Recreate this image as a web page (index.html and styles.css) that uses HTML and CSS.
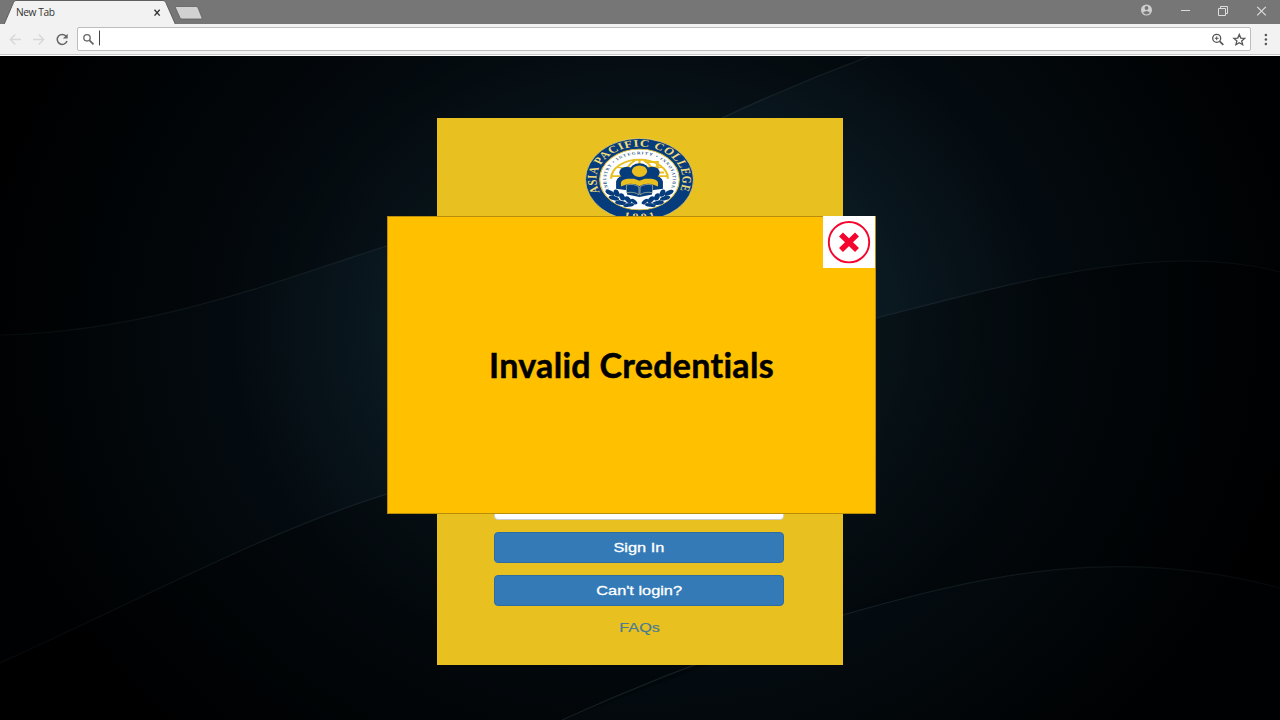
FILE: index.html
```html
<!DOCTYPE html>
<html lang="en">
<head>
<meta charset="utf-8">
<title>New Tab</title>
<link rel="stylesheet" href="styles.css">
</head>
<body>
<header class="browser">
  <div class="tabs">
    <svg class="tab-shapes" width="210" height="24" viewBox="0 0 210 24">
      <path d="M4 24.500 13.500 2.500Q14.300 .5 16 .5H163Q165 .5 165.800 2.500L175.500 24.500Z" fill="#f2f2f2" stroke="#5f5f5f"/>
      <path d="M176 6.500h20q1.500 0 2 1.300l4 10q.5 1.200-1 1.200h-19q-1.500 0-2-1.200l-4.500-10q-.5-1.300.5-1.300z" fill="#d1d1d1" stroke="#606060" stroke-width=".8"/>
      <path d="m154.500 9.800 5.200 5.800m0-5.800-5.200 5.800" stroke="#333" stroke-width="1.400"/>
    </svg>
    <span class="tab-title">New Tab</span>
    <svg class="window-controls" width="140" height="24" viewBox="1140 0 140 24" fill="none" stroke="#dcdcdc">
      <circle cx="1146.500" cy="10" r="5.500" fill="#cfcfcf" stroke="none"/>
      <circle cx="1146.500" cy="8" r="1.900" fill="#777" stroke="none"/>
      <path d="M1143 12.500q3.500-3 7 0-1.500 2-3.500 2t-3.500-2" fill="#777" stroke="none"/>
      <path d="M1181 10.500h9M1218.500 8.500h7v7h-7zM1220.500 8.500v-2h7v7h-2"/>
      <path d="m1257.200 6.800 8.600 8.600m0-8.600-8.600 8.600" stroke-width="1.200"/>
    </svg>
  </div>
  <div class="toolbar">
    <svg class="nav" width="77" height="30" viewBox="0 24 77 30" fill="none">
      <path d="M21 39.500H10.500m4.800-5-5 5 5 5M33 39.500h10.500m-4.800-5 5 5-5 5" stroke="#d8d8d8" stroke-width="1.400"/>
      <path d="M66.300 36.500A5 5 0 1 0 67 41" stroke="#666" stroke-width="1.500"/>
      <path d="M67.700 33.700v4.800h-4.800z" fill="#666"/>
    </svg>
    <div class="address">
      <svg width="24" height="22" viewBox="78 28 24 22" fill="none" stroke="#666">
        <circle cx="87" cy="37.800" r="3.200" stroke-width="1.300"/>
        <path d="m89.500 40.300 4 4" stroke-width="1.700"/>
        <path d="M99.500 30.500v15" stroke="#444"/>
      </svg>
      <svg width="42" height="22" viewBox="1208 28 42 22" fill="none" stroke="#555">
        <circle cx="1216.700" cy="38.300" r="4" stroke-width="1.300"/>
        <path d="m1219.700 41.300 3.600 3.500" stroke-width="1.700"/>
        <path d="M1214.800 38.300h3.800m-1.900-1.900v3.800"/>
        <path d="m1239.300 34.500 1.500 3.600 3.900.3-3 2.500 1 3.800-3.400-2-3.400 2 1-3.800-3-2.500 3.900-.3z" stroke-width="1.300"/>
      </svg>
    </div>
    <svg class="menu" width="28" height="30" viewBox="1252 24 28 30" fill="#555">
      <circle cx="1265.900" cy="35" r="1.250"/><circle cx="1265.900" cy="39.500" r="1.250"/><circle cx="1265.900" cy="44" r="1.250"/>
    </svg>
  </div>
</header>

<main class="page">
  <svg class="backdrop" width="1280" height="664" viewBox="0 56 1280 664" fill="none">
    <defs>
      <radialGradient id="glow" gradientUnits="userSpaceOnUse" cx="0" cy="0" r="1" gradientTransform="matrix(660 0 0 560 640 330)">
        <stop offset="0" stop-color="#112c3a"/><stop offset=".3" stop-color="#0c1e27"/><stop offset=".42" stop-color="#09161d"/><stop offset=".62" stop-color="#040b10"/><stop offset=".85" stop-color="#010507"/><stop offset="1" stop-color="#000102"/>
      </radialGradient>
      <radialGradient id="line" gradientUnits="userSpaceOnUse" cx="640" cy="360" r="660">
        <stop offset="0" stop-color="#20333d"/><stop offset=".4" stop-color="#17242b"/><stop offset=".7" stop-color="#0d1518"/><stop offset="1" stop-color="#05090a"/>
      </radialGradient>
    </defs>
    <path d="M0 56h1280v664H0z" fill="url(#glow)"/>
    <path d="M0 335C150 332 280 280 387 246C570 185 722 118 722 118Q795 84 870 56H0z" fill="#000" opacity=".24"/>
    <path d="M0 663C150 595 270 530 387 494L876 318C1010 284 1160 240 1280 272V588C1120 545 990 573 843 615L562 720H0z" fill="#000" opacity=".28"/>
    <g stroke="url(#line)" stroke-width="1.200">
      <path d="M0 335C150 332 280 280 387 246C570 185 722 118 722 118Q795 84 870 56"/>
      <path d="M0 663C150 595 270 530 387 494L876 318C1010 284 1160 240 1280 272"/>
      <path d="M562 720Q705 655 843 615C990 573 1120 545 1280 588"/>
    </g>
  </svg>

  <section class="login">
    <svg class="seal" width="109" height="83" viewBox="0 0 200 200" preserveAspectRatio="none">
      <defs>
        <path id="ring" d="M27.600 131A79 79 0 1 1 172.400 131"/>
        <path id="motto" d="M44 124A61 61 0 1 1 156 124"/>
        <path id="year" d="M45 179A96 96 0 0 0 155 179"/>
      </defs>
      <circle cx="100" cy="100" r="99" fill="#063c7c" stroke="#f0d676" stroke-width="1.500"/>
      <circle cx="100" cy="100" r="73" fill="#fff" stroke="#e9c33a" stroke-width="2"/>
      <text class="seal-name"><textPath href="#ring" textLength="308">ASIA PACIFIC COLLEGE</textPath></text>
      <text class="seal-motto"><textPath href="#motto" textLength="236">INDUSTRY • INTEGRITY • INNOVATION</textPath></text>
      <text class="seal-year"><textPath href="#year" startOffset="50%" text-anchor="middle" textLength="60">1991</textPath></text>
      <g fill="none" stroke="#e9bf20" stroke-width="4">
        <path d="M48 98a52 46 0 0 1 104 0M60 70q40 16 80 0M48 92h104M74 91q0-23 18-37M126 91q0-23-18-37M100 52v30"/>
        <path d="M111 58h22v13h-15v12h27" stroke-width="5"/>
      </g>
      <g fill="#063c7c">
        <circle cx="100" cy="79" r="18"/><circle cx="77" cy="83" r="14"/><circle cx="123" cy="83" r="14"/>
        <path d="M57 122V105q2-14 20-15h46q18 1 20 15v17l-20 4v10l-23 6-23-6v-10z"/>
      </g>
      <g fill="#e9bf20">
        <circle cx="100" cy="80" r="14"/>
        <path d="M66 117v-10q2-8 12-9h12l10 5 10-5h12q10 1 12 9v10l-12-6q-12-3-22 5-10-8-22-5z"/>
      </g>
      <path d="M76 113q14-4 23 5v19q-9-9-23-5zM101 118q9-9 23-5v19q-14-4-23 5z" fill="#063c7c" stroke="#e9dca0" stroke-width="1.200"/>
      <g id="laurel" fill="#063c7c">
        <path d="M46 128q13 32 47 31" fill="none" stroke="#063c7c" stroke-width="2"/>
        <ellipse cx="46" cy="132" rx="10" ry="5" transform="rotate(35 46 132)"/><ellipse cx="58" cy="133" rx="9" ry="5" transform="rotate(75 58 133)"/>
        <ellipse cx="53" cy="145" rx="10" ry="5" transform="rotate(20 53 145)"/><ellipse cx="68" cy="142" rx="9" ry="5" transform="rotate(75 68 142)"/>
        <ellipse cx="65" cy="156" rx="10" ry="5" transform="rotate(10 65 156)"/><ellipse cx="79" cy="149" rx="9" ry="5" transform="rotate(60 79 149)"/>
        <ellipse cx="80" cy="162" rx="10" ry="4" transform="rotate(-10 80 162)"/><ellipse cx="90" cy="153" rx="8" ry="4" transform="rotate(50 90 153)"/>
      </g>
      <use href="#laurel" transform="matrix(-1 0 0 1 200 0)"/>
    </svg>
    <div class="form">
      <div class="field"></div>
      <button class="button"><span class="wide">Sign In</span></button>
      <button class="button"><span class="wide">Can't login?</span></button>
      <a class="faq"><span class="wide">FAQs</span></a>
    </div>
  </section>

  <section class="dialog" role="alertdialog">
    <h1 class="message">Invalid Credentials</h1>
    <div class="close">
      <svg width="52" height="52" viewBox="0 0 52 52" fill="none" stroke="#f5052d">
        <circle cx="26" cy="26.200" r="20.200" stroke-width="1.900"/>
        <path d="m18 18.500 16 15.600m0-15.600L18 34.100" stroke-width="5.600"/>
      </svg>
    </div>
  </section>
</main>
</body>
</html>
```

FILE: styles.css
```css
* { box-sizing: border-box; }
body { margin: 0; width: 1280px; height: 720px; overflow: hidden; font-family: "Liberation Sans", Arial, sans-serif; }
.browser { height: 56px; background: #f2f2f2; border-bottom: 1px solid #fff; box-shadow: inset 0 -1px #c8c8c8; }
.tabs { position: relative; display: flex; justify-content: space-between; height: 24px; background: #767676; }
.tab-title { position: absolute; left: 16px; top: 5px; font: 10.2px/15px "Open Sans", sans-serif; color: #333; letter-spacing: -.4px; }
.toolbar { display: flex; height: 30px; }
.nav, .menu { flex: none; }
.address { flex: 1; display: flex; justify-content: space-between; height: 24px; margin: 3px 1px 0 0; border: 1px solid #bdbdbd; border-radius: 2px; background: #fff; }
.page { position: relative; height: 664px; padding-top: 62px; background: #010405; }
.backdrop { position: absolute; left: 0; top: 0; }
.login { position: relative; display: flex; flex-direction: column; justify-content: space-between; width: 406px; height: 547px; margin: 0 auto; padding: 20px 59px 29px 57px; background: #e8c120; }
.seal { align-self: center; }
.seal-name { font: bold 24px "Liberation Serif", serif; fill: #f4dc78; }
.seal-motto { font: bold 9px "Liberation Serif", serif; fill: #28547e; }
.seal-year { font: bold 21px "Liberation Serif", serif; fill: #f4dc78; }
.form { display: flex; flex-direction: column; gap: 12px; width: 290px; }
.field { height: 30px; border: 1px solid #ccc; border-radius: 4px; background: #fff; }
.button { display: flex; justify-content: center; align-items: center; height: 31px; padding: 0; border: 1px solid #2e6da4; border-radius: 4px; background: #337ab7; color: #fff; font: 13.4px "Liberation Sans", sans-serif; -webkit-text-stroke: .3px #fff; }
.wide { display: block; transform: scaleX(1.22); }
.faq { display: flex; justify-content: center; height: 17px; margin: 1px -1px 0 0; color: #4a7c94; font: 13.3px/17px "Liberation Sans", sans-serif; -webkit-text-stroke: .2px #4a7c94; }
.dialog { position: absolute; left: 387px; top: 160px; display: flex; align-items: center; justify-content: center; width: 489px; height: 298px; border: 1px solid #b98d0b; background: #ffc000; }
.message { margin: 0; font: bold 34px/42px Lato, sans-serif; font-variant-ligatures: none; letter-spacing: .3px; -webkit-text-stroke: .5px #000; color: #000; white-space: nowrap; }
.close { position: absolute; right: 0; top: -1px; width: 52px; height: 52px; background: #fff; }
```
